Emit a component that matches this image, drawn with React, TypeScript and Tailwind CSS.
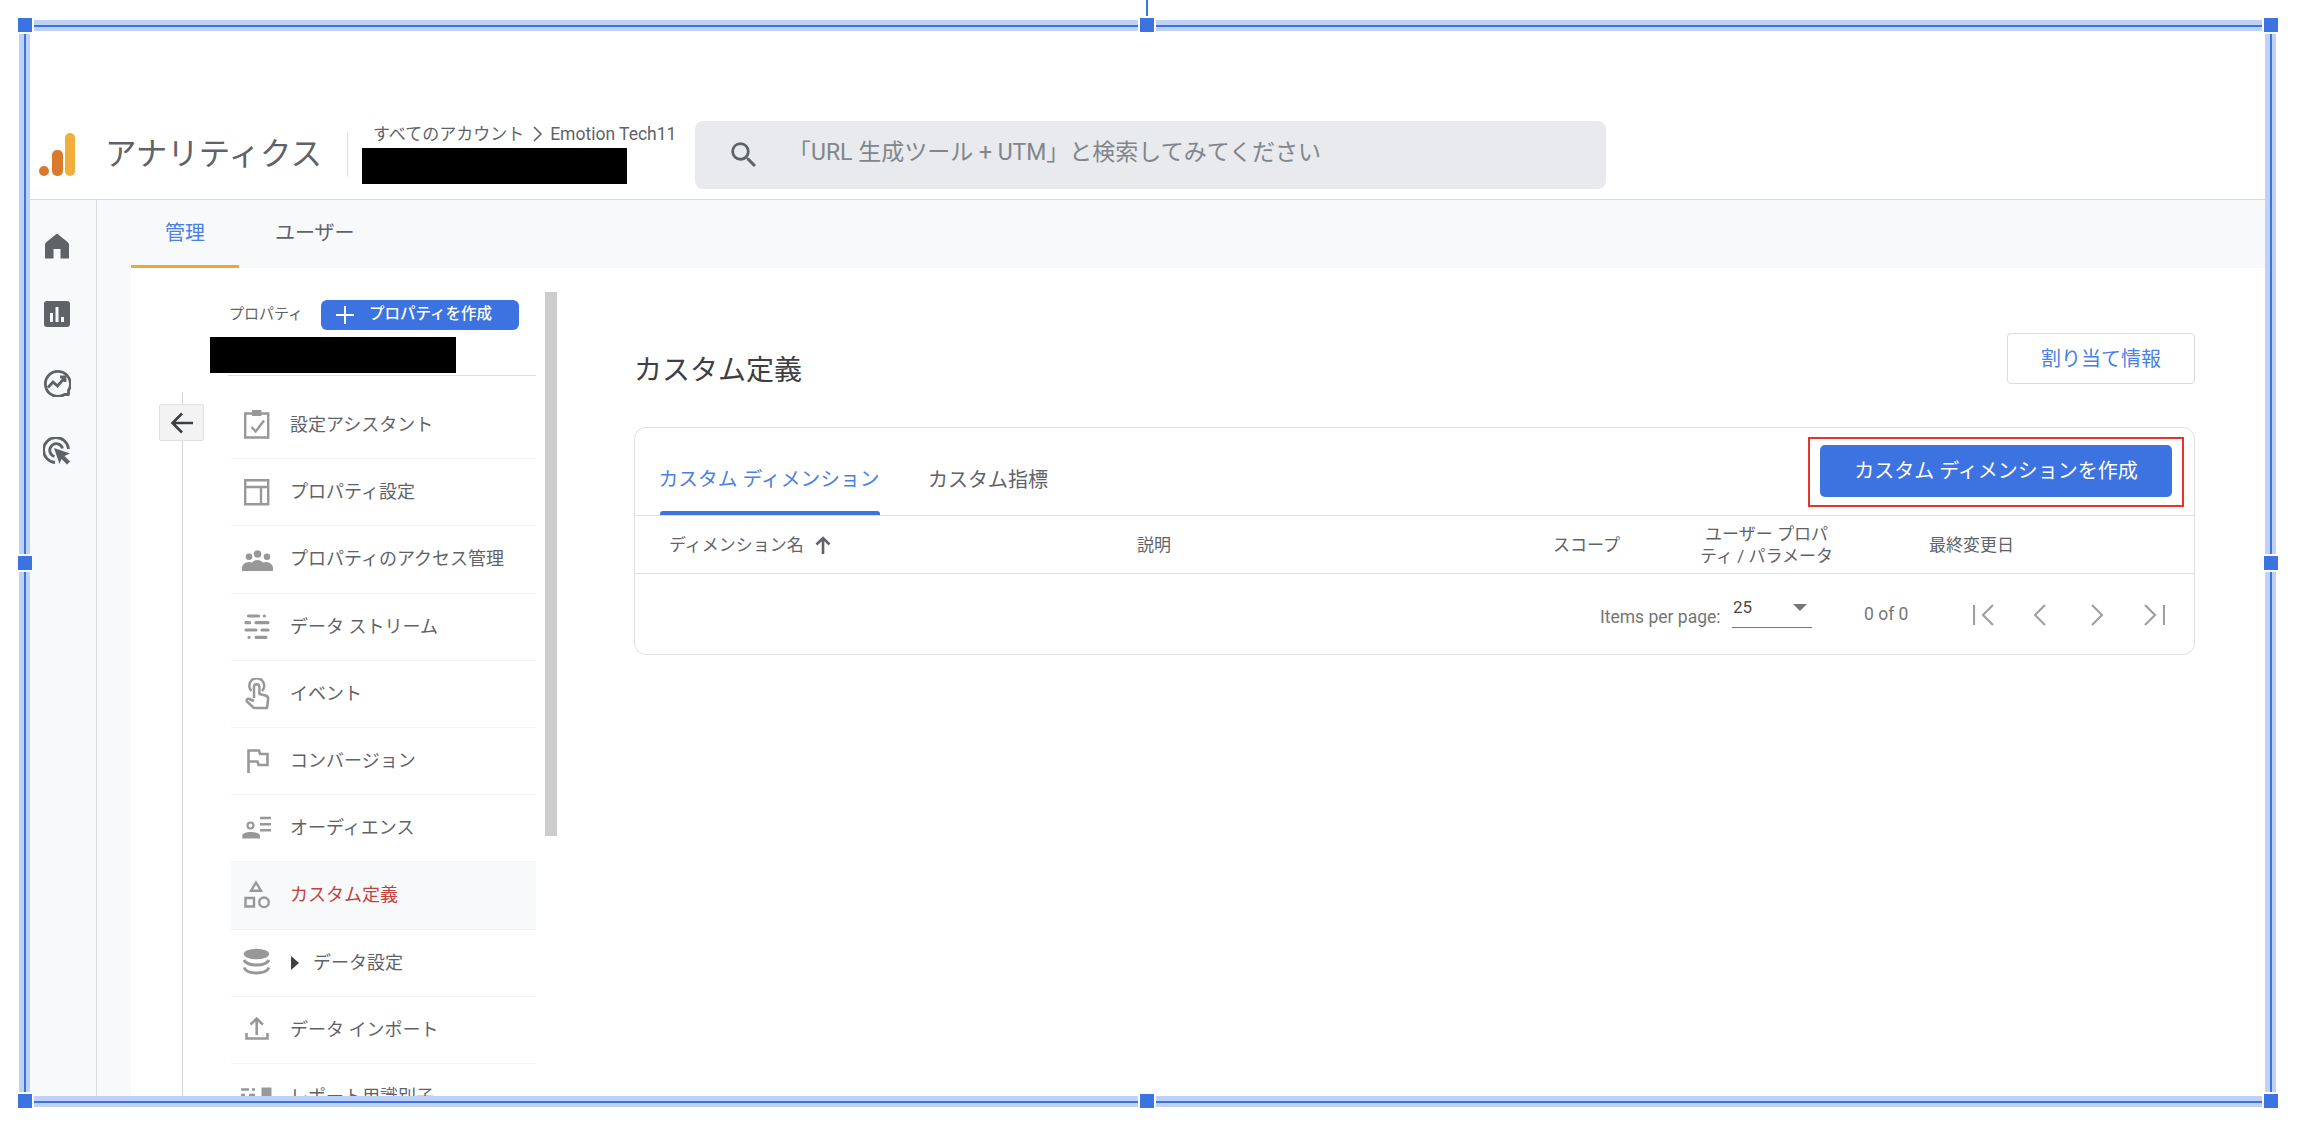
const jp = "font-['Roboto','Noto_Sans_CJK_JP',sans-serif]";

type NavItem = {
  label: string;
  icon: React.ReactNode;
  active?: boolean;
  caret?: boolean;
};

function Glyph({ children }: { children: React.ReactNode }) {
  return (
    <svg width="32" height="32" viewBox="0 0 32 32" fill="none" className="shrink-0">
      {children}
    </svg>
  );
}

const grey = "#989898";

const navItems: NavItem[] = [
  {
    label: "設定アシスタント",
    icon: (
      <Glyph>
        <path d="M4.200 4.500h23v24h-23z" stroke={grey} strokeWidth="2.400" />
        <path d="M11 1h9.400v6H11z" fill={grey} />
        <path d="M10.500 18l4.200 4.500L23 11.500" stroke={grey} strokeWidth="2.400" />
      </Glyph>
    ),
  },
  {
    label: "プロパティ設定",
    icon: (
      <Glyph>
        <path d="M4.200 4.300h23v24h-23zM4.200 11h23M20 11v17" stroke={grey} strokeWidth="2.400" />
      </Glyph>
    ),
  },
  {
    label: "プロパティのアクセス管理",
    icon: (
      <Glyph>
        <g fill={grey}>
          <circle cx="16.500" cy="11" r="3.800" />
          <circle cx="8" cy="13.700" r="3.300" />
          <circle cx="26" cy="13.700" r="3.300" />
          <path d="M1 28v-3c0-3 3-6 7-6 1 0 2 .5 3 .5 1.500-1.500 3.500-2.500 5.500-2.500s4 1 5.500 2.500c1 0 2-.5 3-.5 4 0 7 3 7 6v3z" />
        </g>
      </Glyph>
    ),
  },
  {
    label: "データ ストリーム",
    icon: (
      <Glyph>
        <g stroke={grey} strokeWidth="3.200" strokeLinecap="round">
          <path d="M7.500 5h10M23.300 5h.1M5 11.700h3.500M15 11.700h12M5 19h10M21 19h6M8 26.300h.1M15 26.300h10" />
        </g>
      </Glyph>
    ),
  },
  {
    label: "イベント",
    icon: (
      <Glyph>
        <path
          d="M10.500 13a7.500 7.500 0 1 1 10.500 0M13 20V9a2.700 2.700 0 0 1 5.400 0v7l6 1.500c2 .5 3 2 2.700 4L26 30H13l-7-6.500c-1-1.500.5-3.500 2.500-2.500l4.500 2"
          stroke={grey}
          strokeWidth="2.500"
          strokeLinejoin="round"
        />
      </Glyph>
    ),
  },
  {
    label: "コンバージョン",
    icon: (
      <Glyph>
        <path d="M7.500 28V5.500h10.500l1 3.500h7.500v11H17.500l-1-3.500H7.500" stroke={grey} strokeWidth="2.600" />
      </Glyph>
    ),
  },
  {
    label: "オーディエンス",
    icon: (
      <Glyph>
        <circle cx="9.500" cy="13.500" r="3" stroke={grey} strokeWidth="2.200" />
        <path d="M1.300 26.500v-3c0-2 3.700-3.500 8.700-3.500s9 1.500 9 3.500v3z" fill={grey} />
        <path d="M19 6h11M19 12.300h11M19 18.300h11" stroke={grey} strokeWidth="2.500" />
      </Glyph>
    ),
  },
  {
    label: "カスタム定義",
    active: true,
    icon: (
      <Glyph>
        <path d="M15 3.500l5 8.200H10z" stroke={grey} strokeWidth="2.400" />
        <path d="M4.500 19h8.500v8.500H4.500z" stroke={grey} strokeWidth="2.400" />
        <circle cx="23" cy="23.300" r="4.800" stroke={grey} strokeWidth="2.400" />
      </Glyph>
    ),
  },
  {
    label: "データ設定",
    caret: true,
    icon: (
      <Glyph>
        <ellipse cx="15.500" cy="7" rx="12.700" ry="5.300" fill={grey} />
        <path d="M3 13c2 4 7 5 12.500 5S26 17 28 13M3 20.500c2 4.500 7 5.500 12.500 5.500S26 25 28 20.500" stroke={grey} strokeWidth="3" />
      </Glyph>
    ),
  },
  {
    label: "データ インポート",
    icon: (
      <Glyph>
        <path d="M15.700 21V5M9.500 10.700l6.200-6.200 6.200 6.200" stroke={grey} strokeWidth="2.600" />
        <path d="M5.500 19v5.500h21V19" stroke={grey} strokeWidth="2.600" />
      </Glyph>
    ),
  },
  {
    label: "レポート用識別子",
    icon: (
      <Glyph>
        <path d="M0 8.500h8M11 8.500h3M0 14h4M8 14h6" stroke={grey} strokeWidth="2.400" />
        <path d="M20.500 6.500h10v22h-10z" fill={grey} />
      </Glyph>
    ),
  },
];

function SelectionBox() {
  // the blue frame and handles lying over the screenshot
  const band = "absolute bg-[#bed1f6] flex items-center justify-center";
  const handle = "absolute w-[14px] h-[14px] bg-[#3d73e0]";
  return (
    <>
      <div className={`${band} left-[34px] top-[20px] w-[1104px] h-[11px]`}>
        <div className="w-full h-[2px] bg-[#3d73e0]" />
      </div>
      <div className={`${band} left-[1156px] top-[20px] w-[1106px] h-[11px]`}>
        <div className="w-full h-[2px] bg-[#3d73e0]" />
      </div>
      <div className={`${band} left-[34px] top-[1096px] w-[1104px] h-[11px]`}>
        <div className="w-full h-[2px] bg-[#3d73e0]" />
      </div>
      <div className={`${band} left-[1156px] top-[1096px] w-[1106px] h-[11px]`}>
        <div className="w-full h-[2px] bg-[#3d73e0]" />
      </div>
      <div className={`${band} left-[19px] top-[34px] w-[11px] h-[520px]`}>
        <div className="h-full w-[2px] bg-[#3d73e0]" />
      </div>
      <div className={`${band} left-[19px] top-[572px] w-[11px] h-[520px]`}>
        <div className="h-full w-[2px] bg-[#3d73e0]" />
      </div>
      <div className={`${band} left-[2265px] top-[34px] w-[11px] h-[520px]`}>
        <div className="h-full w-[2px] bg-[#3d73e0]" />
      </div>
      <div className={`${band} left-[2265px] top-[572px] w-[11px] h-[520px]`}>
        <div className="h-full w-[2px] bg-[#3d73e0]" />
      </div>
      <div className="absolute left-[1146px] top-0 w-[2px] h-[16px] bg-[#3d73e0]" />
      <div className={`${handle} left-[18px] top-[18px]`} />
      <div className={`${handle} left-[1140px] top-[18px]`} />
      <div className={`${handle} left-[2264px] top-[18px]`} />
      <div className={`${handle} left-[18px] top-[556px]`} />
      <div className={`${handle} left-[2264px] top-[556px]`} />
      <div className={`${handle} left-[18px] top-[1094px]`} />
      <div className={`${handle} left-[1140px] top-[1094px]`} />
      <div className={`${handle} left-[2264px] top-[1094px]`} />
    </>
  );
}

function Header() {
  return (
    <header className="h-[174px] shrink-0 flex items-center pt-[84px] pl-[13px] border-b border-[#dadce0] bg-white">
      <svg width="36" height="43" viewBox="0 0 36 43" className="shrink-0">
        <rect x="26" width="10" height="43" rx="5" fill="#f1ae3a" />
        <rect x="13" y="17" width="11" height="26" rx="5" fill="#d97a2c" />
        <circle cx="5" cy="38" r="5" fill="#d97a2c" />
      </svg>
      <div className="ml-[30px] w-[216px] text-[31.500px] leading-[40px] text-[#5f6368] whitespace-nowrap">アナリティクス</div>
      <div className="ml-[26px] w-px h-[45px] bg-[#e0e0e0]" />
      <div className="ml-[14px] w-[265px] -mt-[2px]">
        <div className="pl-[11px] h-[22px] flex items-center text-[17px] leading-[22px] text-[#5f6368] whitespace-nowrap">
          すべてのアカウント
          <svg width="12" height="16" viewBox="0 0 12 16" fill="none" className="shrink-0 ml-[8px] mr-[6px]">
            <path d="M2 1l7 7-7 7" stroke="#5f6368" strokeWidth="1.600" />
          </svg>
          <span className="text-[17.500px]">Emotion Tech11</span>
        </div>
        <div className="mt-[3px] h-[36px] bg-black" />
      </div>
      <div className="ml-[68px] w-[911px] h-[68px] rounded-[8px] bg-[#e8eaed] flex items-center pl-[32px]">
        <svg width="34" height="34" viewBox="0 0 24 24" fill="#5f6368" className="shrink-0">
          <path d="M15.500 14h-.79l-.28-.27A6.470 6.470 0 0 0 16 9.500 6.500 6.500 0 1 0 9.500 16c1.610 0 3.090-.59 4.230-1.570l.27.28v.79l5 4.990L20.490 19l-4.990-5zm-6 0C7.010 14 5 11.990 5 9.500S7.010 5 9.500 5 14 7.010 14 9.500 11.990 14 9.500 14z" />
        </svg>
        <div className="ml-[27px] text-[23px] leading-[30px] text-[#80868b] whitespace-nowrap -mt-[4px]">
          「URL 生成ツール + UTM」と検索してみてください
        </div>
      </div>
    </header>
  );
}

function Rail() {
  return (
    <aside className="w-[71px] shrink-0 border-r border-[#dadce0] bg-[#f8f9fa] pl-[17px] pt-[31.500px] flex flex-col gap-[40.500px]">
      <svg width="28" height="28" viewBox="0 0 28 28" fill="#5f6368">
        <path d="M14 1.500l10.500 8.500q1.500 1 1.500 2.500v14h-8.500v-9.500h-7v9.500H2v-14q0-1.500 1.500-2.500z" />
      </svg>
      <svg width="28" height="28" viewBox="0 0 28 28" fill="#5f6368">
        <path
          fillRule="evenodd"
          d="M4 1h20a3 3 0 0 1 3 3v20a3 3 0 0 1-3 3H4a3 3 0 0 1-3-3V4a3 3 0 0 1 3-3zM7 13v9h3v-9zm5.500-6v15h3V7zM18 17v5h3v-5z"
        />
      </svg>
      <svg width="28" height="28" viewBox="0 0 28 28" fill="none" stroke="#5f6368" strokeWidth="2.800">
        <path d="M25.500 21.500A12.500 12.500 0 1 0 21.500 25.500L25.500 25.500z" strokeLinejoin="round" />
        <path d="M5 18.500l5-5.500 4.500 4 7-8M17 8h5v5" />
      </svg>
      <svg width="28" height="28" viewBox="0 0 28 28" fill="none" stroke="#5f6368" strokeWidth="2.800">
        <path d="M12 25.500A12.500 12.500 0 1 1 25.500 12" />
        <path d="M11.500 19.500A6.500 6.500 0 1 1 19.500 11.500" />
        <path d="M11 11l16 5.500-5.500 2.500 5.500 5.500-3 3-5.500-5.500L16.500 27z" fill="#5f6368" stroke="none" />
      </svg>
    </aside>
  );
}

function NavRow({ item }: { item: NavItem }) {
  return (
    <div
      className={`h-[67.200px] shrink-0 flex items-center border-b border-[#f1f3f4] ${item.active ? "bg-[#f8f9fa]" : ""}`}
    >
      <div className="w-[59px] pl-[10px] flex">{item.icon}</div>
      {item.caret && (
        <svg width="8" height="14" viewBox="0 0 8 14" className="ml-[1px] mr-[14px]">
          <path d="M0 0l8 7-8 7z" fill="#3c4043" />
        </svg>
      )}
      <span className={`text-[18px] leading-[24px] whitespace-nowrap ${item.active ? "text-[#c5403a]" : "text-[#5f6368]"}`}>
        {item.label}
      </span>
    </div>
  );
}

function Sidebar() {
  return (
    <div className="w-[426px] shrink-0 flex">
      <div className="w-[414px]">
        <div className="pt-[32px] pl-[98px] flex items-center">
          <span className="w-[92px] -mt-[2px] text-[15px] leading-[30px] text-[#5f6368]">プロパティ</span>
          <button className="w-[198px] h-[30px] rounded-[6px] bg-[#3d73e0] flex items-center pl-[15px] text-white text-[15.500px] font-medium">
            <svg width="18" height="18" viewBox="0 0 18 18" stroke="#fff" strokeWidth="2" className="mr-[15px]">
              <path d="M9 0v18M0 9h18" />
            </svg>
            プロパティを作成
          </button>
        </div>
        <div className="ml-[79px] mt-[7px] w-[246px] h-[36px] bg-black" />
        <div className="ml-[97px] mt-[2px] w-[308px] h-px bg-[#e0e0e0]" />
        <div className="mt-[16px] flex">
          <div className="relative w-[100px] self-stretch">
            <div className="absolute left-[51px] top-0 bottom-0 w-px bg-[#d5d5d5]" />
            <button className="relative ml-[28px] mt-[12px] w-[45px] h-[37px] rounded-[2px] border border-[#e0e0e0] bg-[#f3f3f3] flex items-center justify-center">
              <svg width="24" height="22" viewBox="0 0 24 22" fill="none" stroke="#3c4043" strokeWidth="2.600">
                <path d="M23 11H3M12 1.500L2.500 11 12 20.500" />
              </svg>
            </button>
          </div>
          <div className="w-[305px]">
            {navItems.map((item) => (
              <NavRow key={item.label} item={item} />
            ))}
          </div>
        </div>
      </div>
      <div className="w-[12px] h-[544px] mt-[24px] bg-[#cdcdcd]" />
    </div>
  );
}

function PagerIcon({ d, w }: { d: string; w: number }) {
  return (
    <svg width={w} height="22" viewBox={`0 0 ${w} 22`} fill="none" stroke="#a0a0a0" strokeWidth="2.200">
      <path d={d} />
    </svg>
  );
}

function CustomDefs() {
  return (
    <main className="flex-1 pl-[77px] pt-[65px]">
      <div className="w-[1561px] h-[51px] flex justify-between items-start">
        <h1 className="mt-[23px] text-[28px] leading-[30px] font-normal text-[#3c4043]">カスタム定義</h1>
        <button className="w-[188px] h-[51px] rounded-[4px] border border-[#dadce0] text-[20px] text-[#4a7fe5]">割り当て情報</button>
      </div>
      <section className="mt-[43px] w-[1561px] h-[228px] rounded-[12px] border border-[#e0e0e0] bg-white">
        <div className="h-[88px] flex justify-between items-start border-b border-[#e0e0e0]">
          <div className="self-end flex pl-[25px] text-[20px] leading-[28px]">
            <div className="w-[220px]">
              <div className="-ml-[2px] text-center whitespace-nowrap text-[19.800px] text-[#4a7fe5]">カスタム ディメンション</div>
              <div className="mt-[17px] h-[4px] rounded-t-[3px] bg-[#3d73e0]" />
            </div>
            <div className="ml-[48px] text-[#5f6368]">カスタム指標</div>
          </div>
          <div className="mt-[9px] mr-[10px] border-2 border-[#e8322a] px-[10px] pt-[6px] pb-[8px]">
            <button className="block w-[352px] h-[52px] rounded-[5px] bg-[#3d73e0] text-white text-[20px]">カスタム ディメンションを作成</button>
          </div>
        </div>
        <div className="h-[58px] pl-[34px] grid grid-cols-[468px_416px_146px_230px_1fr] items-center border-b border-[#e0e0e0] text-[17px] leading-[22px] text-[#5f6368]">
          <div className="flex items-center">
            ディメンション名
            <svg width="16" height="18" viewBox="0 0 16 18" fill="none" stroke="#5f6368" strokeWidth="2.600" className="ml-[11px]">
              <path d="M8 18V2M1.500 8.500L8 2l6.500 6.500" />
            </svg>
          </div>
          <div>説明</div>
          <div>スコープ</div>
          <div className="w-[135px] text-center">ユーザー プロパティ / パラメータ</div>
          <div>最終変更日</div>
        </div>
        <div className="pl-[965px] flex items-start text-[#757575]">
          <div className="w-[132px] mt-[31px] text-[17.500px] leading-[24px] whitespace-nowrap">Items per page:</div>
          <div className="w-[80px] h-[33px] mt-[21px] flex justify-between border-b border-[#757575] pl-[1px] pr-[5px] text-[#4a4a4a]">
            <span className="text-[17px] leading-[24px]">25</span>
            <svg width="14" height="7" viewBox="0 0 14 7" className="mt-[9px]">
              <path d="M0 0h14L7 7z" fill="#757575" />
            </svg>
          </div>
          <div className="ml-[52px] mt-[28px] text-[17.500px] leading-[24px]">0 of 0</div>
          <div className="ml-[65px] mt-[30px] flex">
            <PagerIcon w={21} d="M1 1v20M20 1L10 11l10 10" />
            <div className="ml-[40px]">
              <PagerIcon w={12} d="M11 1L1 11l10 10" />
            </div>
            <div className="ml-[45px]">
              <PagerIcon w={12} d="M1 1l10 10-10 10" />
            </div>
            <div className="ml-[41px]">
              <PagerIcon w={21} d="M20 1v20M1 1l10 10L1 21" />
            </div>
          </div>
        </div>
      </section>
    </main>
  );
}

export default function App() {
  return (
    <div className={`relative w-[2298px] h-[1134px] bg-white overflow-hidden ${jp}`}>
      <div className="pt-[26px] pl-[26px]">
        <div className="w-[2244px] h-[1075px] overflow-hidden flex flex-col">
          <Header />
          <div className="flex-1 min-h-0 flex">
            <Rail />
            <div className="flex-1 min-w-0 flex flex-col">
              <div className="h-[68px] shrink-0 pl-[34px] bg-[#f8f9fa] flex text-[20px]">
                <div className="w-[108px] h-full flex items-center justify-center border-b-[3px] border-[#f2a33a] text-[#4a7fe5]">管理</div>
                <div className="ml-[36px] h-full flex items-center pb-[3px] text-[#5f6368]">ユーザー</div>
              </div>
              <div className="flex-1 min-h-0 pl-[34px] bg-[#f8f9fa]">
                <div className="h-full flex bg-white">
                  <Sidebar />
                  <CustomDefs />
                </div>
              </div>
            </div>
          </div>
        </div>
      </div>
      <SelectionBox />
    </div>
  );
}
